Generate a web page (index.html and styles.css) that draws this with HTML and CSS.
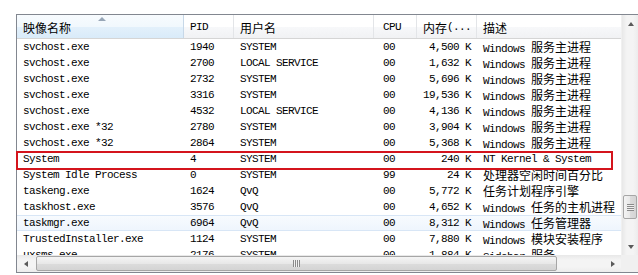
FILE: index.html
```html
<!DOCTYPE html>
<html lang="zh-CN">
<head>
    <meta charset="UTF-8">
    <title>进程列表</title>
    <link rel="stylesheet" href="styles.css">
</head>
<body>
    <div class="listview">
        <div class="main">
            <div class="list">
                <div class="header">
                    <div class="hcell col-name sorted"><span class="zh">映像名称</span><span class="sort-arrow"></span></div>
                    <div class="hcell col-pid">PID</div>
                    <div class="hcell col-user"><span class="zh">用户名</span></div>
                    <div class="hcell col-cpu">CPU</div>
                    <div class="hcell col-mem"><span class="zh">内存</span>(...</div>
                    <div class="hcell col-desc"><span class="zh">描述</span></div>
                </div>
                <div class="rows">
                    <div class="row"><span class="col-name">svchost.exe</span><span class="col-pid">1940</span><span class="col-user">SYSTEM</span><span class="col-cpu">00</span><span class="col-mem">4,500 K</span><span class="col-desc">Windows <span class="zh">服务主进程</span></span></div>
                    <div class="row"><span class="col-name">svchost.exe</span><span class="col-pid">2700</span><span class="col-user">LOCAL SERVICE</span><span class="col-cpu">00</span><span class="col-mem">1,632 K</span><span class="col-desc">Windows <span class="zh">服务主进程</span></span></div>
                    <div class="row"><span class="col-name">svchost.exe</span><span class="col-pid">2732</span><span class="col-user">SYSTEM</span><span class="col-cpu">00</span><span class="col-mem">5,696 K</span><span class="col-desc">Windows <span class="zh">服务主进程</span></span></div>
                    <div class="row"><span class="col-name">svchost.exe</span><span class="col-pid">3316</span><span class="col-user">SYSTEM</span><span class="col-cpu">00</span><span class="col-mem">19,536 K</span><span class="col-desc">Windows <span class="zh">服务主进程</span></span></div>
                    <div class="row"><span class="col-name">svchost.exe</span><span class="col-pid">4532</span><span class="col-user">LOCAL SERVICE</span><span class="col-cpu">00</span><span class="col-mem">4,136 K</span><span class="col-desc">Windows <span class="zh">服务主进程</span></span></div>
                    <div class="row"><span class="col-name">svchost.exe *32</span><span class="col-pid">2780</span><span class="col-user">SYSTEM</span><span class="col-cpu">00</span><span class="col-mem">3,904 K</span><span class="col-desc">Windows <span class="zh">服务主进程</span></span></div>
                    <div class="row"><span class="col-name">svchost.exe *32</span><span class="col-pid">2864</span><span class="col-user">SYSTEM</span><span class="col-cpu">00</span><span class="col-mem">5,368 K</span><span class="col-desc">Windows <span class="zh">服务主进程</span></span></div>
                    <div class="row"><span class="col-name">System</span><span class="col-pid">4</span><span class="col-user">SYSTEM</span><span class="col-cpu">00</span><span class="col-mem">240 K</span><span class="col-desc">NT Kernel &amp; System</span></div>
                    <div class="row"><span class="col-name">System Idle Process</span><span class="col-pid">0</span><span class="col-user">SYSTEM</span><span class="col-cpu">99</span><span class="col-mem">24 K</span><span class="col-desc"><span class="zh">处理器空闲时间百分比</span></span></div>
                    <div class="row"><span class="col-name">taskeng.exe</span><span class="col-pid">1624</span><span class="col-user">QvQ</span><span class="col-cpu">00</span><span class="col-mem">5,772 K</span><span class="col-desc"><span class="zh">任务计划程序引擎</span></span></div>
                    <div class="row"><span class="col-name">taskhost.exe</span><span class="col-pid">3576</span><span class="col-user">QvQ</span><span class="col-cpu">00</span><span class="col-mem">4,652 K</span><span class="col-desc">Windows <span class="zh">任务的主机进程</span></span></div>
                    <div class="row hot"><span class="col-name">taskmgr.exe</span><span class="col-pid">6964</span><span class="col-user">QvQ</span><span class="col-cpu">00</span><span class="col-mem">8,312 K</span><span class="col-desc">Windows <span class="zh">任务管理器</span></span></div>
                    <div class="row"><span class="col-name">TrustedInstaller.exe</span><span class="col-pid">1124</span><span class="col-user">SYSTEM</span><span class="col-cpu">00</span><span class="col-mem">7,880 K</span><span class="col-desc">Windows <span class="zh">模块安装程序</span></span></div>
                    <div class="row"><span class="col-name">uxsms.exe</span><span class="col-pid">2176</span><span class="col-user">SYSTEM</span><span class="col-cpu">00</span><span class="col-mem">1,884 K</span><span class="col-desc">Sidebar <span class="zh">服务</span></span></div>
                </div>
            </div>
            <div class="vscroll">
                <div class="sb-btn"><span class="arrow up"></span></div>
                <div class="vtrack"><div class="vthumb"><span class="grip"></span></div></div>
                <div class="sb-btn"><span class="arrow down"></span></div>
            </div>
        </div>
        <div class="hscroll">
            <div class="sb-btn"><span class="arrow left"></span></div>
            <div class="htrack"><div class="hthumb"><span class="grip"></span></div></div>
            <div class="sb-btn"><span class="arrow right"></span></div>
            <div class="corner"></div>
        </div>
    </div>

    <!-- highlight around the System row -->
    <div class="mark"></div>
</body>
</html>
```

FILE: styles.css
```css
* {
    box-sizing: border-box;
}

html, body {
    margin: 0;
    padding: 0;
    background-color: #fff;
}

body {
    padding: 14px 0 0 16px;
    overflow: hidden;
    font-family: 'Liberation Mono', 'DejaVu Sans Mono', monospace;
    font-size: 11px;
    letter-spacing: -0.6px;
    color: #000;
}

.zh {
    font-family: 'Noto Sans CJK SC', sans-serif;
    font-size: 12px;
    letter-spacing: 0;
}

.listview {
    width: 623px;
    height: 259px;
    border: 1px solid #828790;
    display: flex;
    flex-direction: column;
    background-color: #fff;
}

.main {
    flex: 1;
    display: flex;
    min-height: 0;
}

.list {
    width: 604px;
    overflow: hidden;
}

/* column widths */
.header,
.row {
    display: grid;
    grid-template-columns: 167px 50px 140px 43px 60px 144px;
}

.header {
    height: 24px;
    border-bottom: 1px solid #d5d5d5;
    background: linear-gradient(#ffffff, #ffffff 50%, #f7f8fa 51%, #f1f2f4);
}

.hcell {
    position: relative;
    display: flex;
    align-items: center;
    padding: 1px 0 0 6px;
    border-right: 1px solid #e3e5e8;
    white-space: nowrap;
    overflow: hidden;
}

.hcell.sorted {
    background: linear-gradient(#f7fbfe, #f1f8fd 50%, #e3f0fb 51%, #d9ebf9);
    border-right-color: #c7d8e8;
}

.sort-arrow {
    position: absolute;
    left: 81px;
    top: 2px;
    width: 0;
    height: 0;
    border-left: 4px solid transparent;
    border-right: 4px solid transparent;
    border-bottom: 4px solid #97a6b7;
}

.hcell.col-cpu,
.row .col-cpu {
    padding-left: 9px;
}

.hcell.col-mem {
    padding-left: 6px;
}

.hcell.col-desc {
    border-right: none;
}

.row {
    height: 16px;
    line-height: 16px;
    white-space: nowrap;
}

.row > span {
    padding-left: 6px;
    overflow: hidden;
}

.row .col-mem {
    text-align: right;
    padding-right: 6px;
}

.row.hot {
    background: linear-gradient(#f8fbfe, #eef5fd);
    box-shadow: inset 0 1px 0 #d8e6f6, inset 0 -1px 0 #d8e6f6;
}

/* scrollbars */
.vscroll {
    width: 17px;
    display: flex;
    flex-direction: column;
    background: linear-gradient(to right, #e8e8e8, #f4f4f4 30%, #f4f4f4 70%, #ececec);
    border-left: 1px solid #f0f0f0;
}

.sb-btn {
    width: 17px;
    height: 17px;
    display: flex;
    align-items: center;
    justify-content: center;
    flex-shrink: 0;
}

.arrow {
    width: 0;
    height: 0;
}

.arrow.up {
    border-left: 3px solid transparent;
    border-right: 3px solid transparent;
    border-bottom: 4px solid #5a5a5a;
}

.arrow.down {
    border-left: 3px solid transparent;
    border-right: 3px solid transparent;
    border-top: 4px solid #5a5a5a;
}

.arrow.left {
    border-top: 3px solid transparent;
    border-bottom: 3px solid transparent;
    border-right: 4px solid #5a5a5a;
}

.arrow.right {
    border-top: 3px solid transparent;
    border-bottom: 3px solid transparent;
    border-left: 4px solid #5a5a5a;
}

.vtrack {
    flex: 1;
    padding-top: 163px;
}

.vthumb {
    margin: 0 1px;
    height: 24px;
    border: 1px solid #a6a6a6;
    border-radius: 2px;
    background: linear-gradient(to right, #f4f4f4, #e8e8e8 50%, #dcdcdc 51%, #d4d4d4);
    display: flex;
    align-items: center;
    justify-content: center;
}

.vthumb .grip {
    width: 7px;
    height: 7px;
    background: repeating-linear-gradient(#8a8a8a 0, #8a8a8a 1px, #f0f0f0 1px, #f0f0f0 2px);
}

.hscroll {
    height: 17px;
    display: flex;
    background: linear-gradient(#e8e8e8, #f4f4f4 30%, #f4f4f4 70%, #ececec);
}

.htrack {
    width: 570px;
    padding-left: 2px;
    display: flex;
}

.hthumb {
    width: 521px;
    margin: 1px 0;
    border: 1px solid #a6a6a6;
    border-radius: 2px;
    background: linear-gradient(#f4f4f4, #e8e8e8 50%, #dcdcdc 51%, #d4d4d4);
    display: flex;
    align-items: center;
    justify-content: center;
}

.hthumb .grip {
    width: 7px;
    height: 7px;
    background: repeating-linear-gradient(to right, #8a8a8a 0, #8a8a8a 1px, #f0f0f0 1px, #f0f0f0 2px);
}

.corner {
    flex: 1;
    background-color: #f0f0f0;
}

.mark {
    position: absolute;
    left: 16px;
    top: 151px;
    width: 597px;
    height: 19px;
    border: 2px solid #d4141c;
}
```
